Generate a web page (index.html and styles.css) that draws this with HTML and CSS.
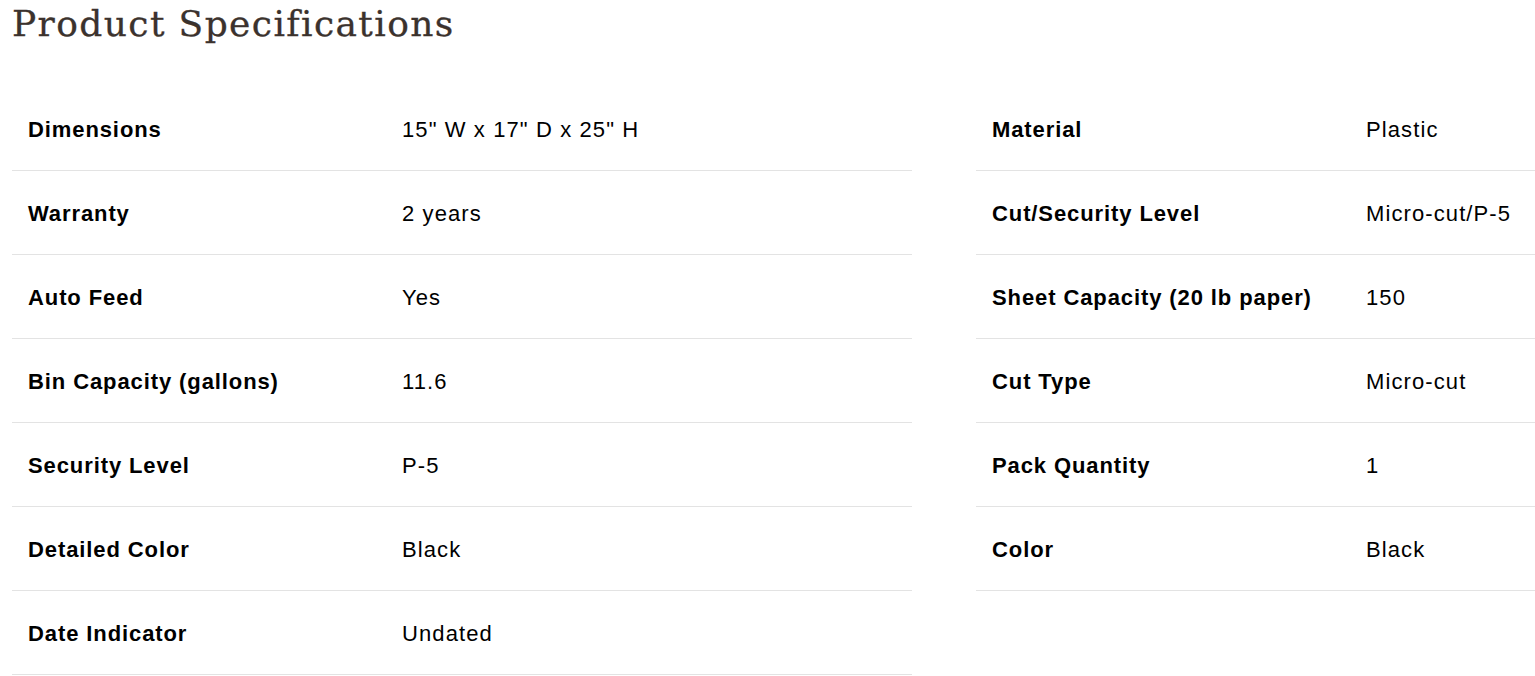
FILE: index.html
```html
<!DOCTYPE html>
<html lang="en">
<head>
<meta charset="utf-8">
<title>Product Specifications</title>
<link rel="stylesheet" href="styles.css">
</head>
<body>
<section class="specs-section">
  <h1 class="specs-title">Product Specifications</h1>
  <div class="specs">
    <div class="spec-table">
      <div class="spec-row"><div class="spec-label">Dimensions</div><div class="spec-value">15" W x 17" D x 25" H</div></div>
      <div class="spec-row"><div class="spec-label">Warranty</div><div class="spec-value">2 years</div></div>
      <div class="spec-row"><div class="spec-label">Auto Feed</div><div class="spec-value">Yes</div></div>
      <div class="spec-row"><div class="spec-label">Bin Capacity (gallons)</div><div class="spec-value">11.6</div></div>
      <div class="spec-row"><div class="spec-label">Security Level</div><div class="spec-value">P-5</div></div>
      <div class="spec-row"><div class="spec-label">Detailed Color</div><div class="spec-value">Black</div></div>
      <div class="spec-row"><div class="spec-label">Date Indicator</div><div class="spec-value">Undated</div></div>
    </div>
    <div class="spec-table">
      <div class="spec-row"><div class="spec-label">Material</div><div class="spec-value">Plastic</div></div>
      <div class="spec-row"><div class="spec-label">Cut/Security Level</div><div class="spec-value">Micro-cut/P-5</div></div>
      <div class="spec-row"><div class="spec-label">Sheet Capacity (20 lb paper)</div><div class="spec-value">150</div></div>
      <div class="spec-row"><div class="spec-label">Cut Type</div><div class="spec-value">Micro-cut</div></div>
      <div class="spec-row"><div class="spec-label">Pack Quantity</div><div class="spec-value">1</div></div>
      <div class="spec-row"><div class="spec-label">Color</div><div class="spec-value">Black</div></div>
    </div>
  </div>
</section>
</body>
</html>
```
FILE: styles.css
```css
html, body {
  margin: 0;
  padding: 0;
  background: #ffffff;
  overflow: hidden;
}
.specs-section {
  padding: 0 0 0 12px;
  font-family: "Liberation Sans", Arial, sans-serif;
  color: #000;
}
.specs-title {
  margin: 0;
  padding-top: 1px;
  height: 87px;
  box-sizing: border-box;
  font-family: "DejaVu Serif", serif;
  font-weight: normal;
  font-size: 36px;
  line-height: 46px;
  letter-spacing: 1.4px;
  color: #3b322d;
  -webkit-text-stroke: 0.3px #3b322d;
}
.specs {
  display: flex;
  gap: 64px;
  width: 1900px;
}
.spec-table {
  width: 900px;
  flex: none;
}
.spec-row {
  display: grid;
  grid-template-columns: 374px 1fr;
  align-items: center;
  height: 81px;
  padding-top: 2px;
  border-bottom: 1px solid #e3e3e3;
  font-size: 22px;
  letter-spacing: 0.9px;
}
.spec-label {
  padding-left: 16px;
  font-weight: bold;
}
.spec-value {
  padding-left: 16px;
  letter-spacing: 1.1px;
}
```
